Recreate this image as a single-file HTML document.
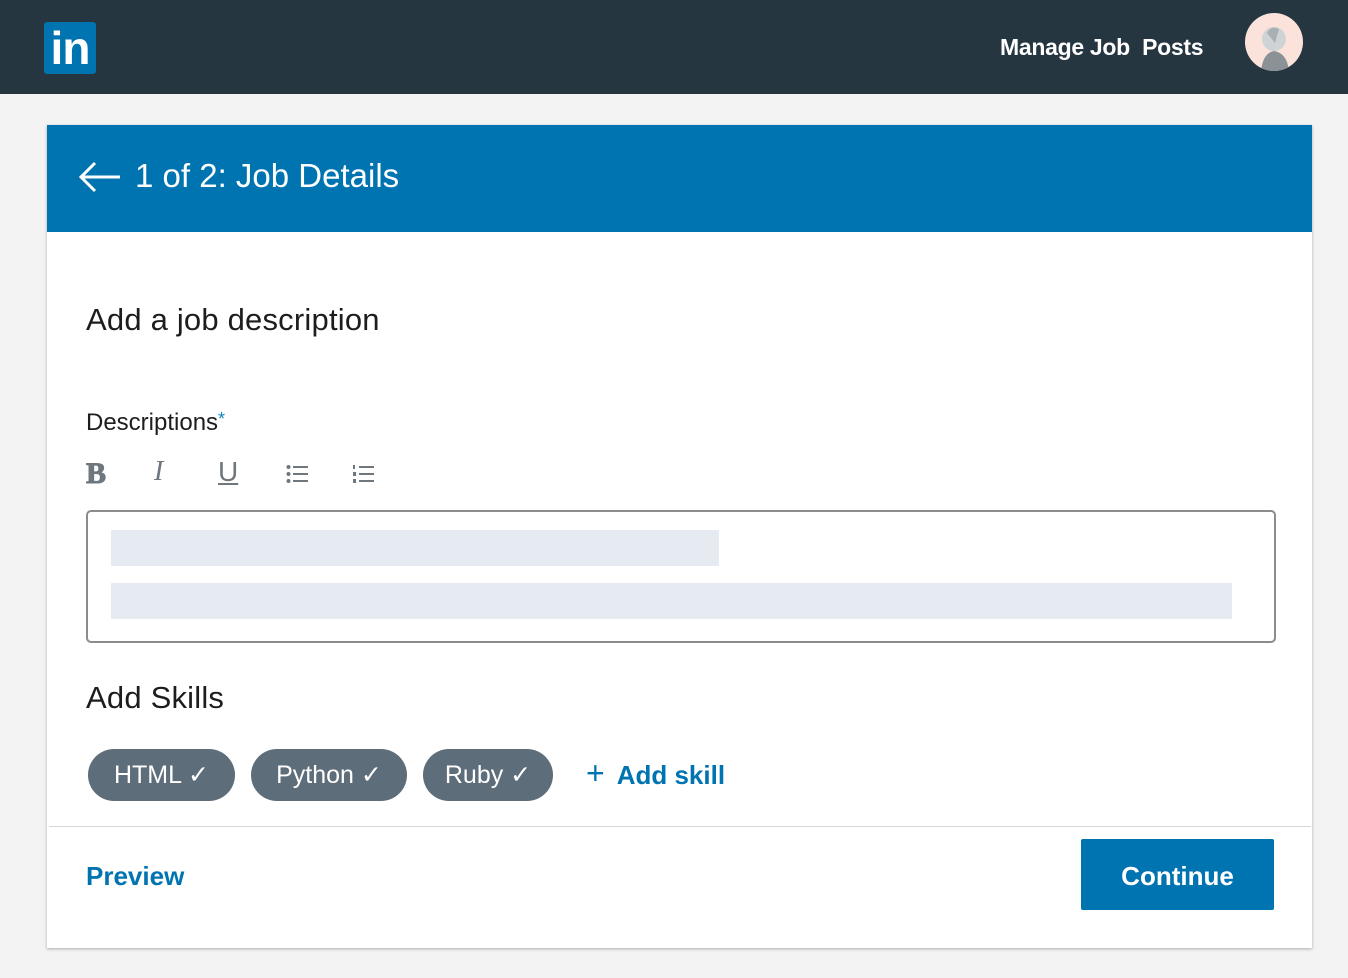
<!DOCTYPE html>
<html><head><meta charset="utf-8"><style>
*{margin:0;padding:0;box-sizing:border-box}
body{width:1348px;height:978px;background:#f3f3f3;font-family:"Liberation Sans",sans-serif;position:relative;overflow:hidden}
.abs{position:absolute}
.top{left:0;top:0;width:1348px;height:94px;background:#263640}
.logo{left:44px;top:22px;width:52px;height:52px;background:#0073b1;border-radius:3px;color:#fff;font-weight:bold;font-size:46px;line-height:52px;text-align:center;letter-spacing:-1px}
.mjp{left:1000px;top:34px;color:#fff;font-size:23px;font-weight:bold;letter-spacing:-0.3px}
.av{left:1245px;top:13px;width:58px;height:58px;border-radius:50%;background:#fbe3dc;overflow:hidden}
.card{left:47px;top:125px;width:1265px;height:823px;background:#fff;box-shadow:0 1px 3px rgba(0,0,0,.3)}
.hd{left:47px;top:125px;width:1265px;height:107px;background:#0073b1}
.t1{left:135px;top:157px;color:#fff;font-size:33px}
.h2{left:86px;top:302px;font-size:31px;color:#1d1d1d;letter-spacing:0.2px}
.lab{left:86px;top:409px;font-size:24px;color:#1d1d1d}
.lab span{color:#0a84c4;font-size:18px;vertical-align:top}
.tb{top:456px;color:#6e777e;font-size:28px;font-weight:bold}
.ta{left:86px;top:510px;width:1190px;height:133px;border:2px solid #8c8c8c;border-radius:5px}
.bar{background:#e6ebf2;height:36px}
.pill{top:749px;height:52px;border-radius:26px;background:#5e6d7a;color:#fff;font-size:25px;line-height:52px;text-align:center}
.blue{color:#0073b1}
</style></head><body>
<div class="abs top"></div>
<div class="abs logo">in</div>
<div class="abs mjp">Manage Job&nbsp; Posts</div>
<div class="abs av"><svg width="58" height="58"><circle cx="29" cy="26" r="12" fill="#cfd3d5"/><path d="M16 58 Q18 40 29 38 Q42 40 44 58Z" fill="#8a9197"/><path d="M22 20 Q26 12 34 16 L30 30 Z" fill="#a9b0b4"/></svg></div>
<div class="abs card"></div>
<div class="abs hd"></div>
<svg class="abs" style="left:78px;top:160px" width="44" height="34"><path d="M42 17H3M17 3L3 17L17 31" stroke="#fff" stroke-width="3" fill="none"/></svg>
<div class="abs t1">1 of 2: Job Details</div>
<div class="abs h2">Add a job description</div>
<div class="abs lab">Descriptions<span>*</span></div>
<div class="abs tb" style="left:86px;top:457px;font-family:'Liberation Serif',serif;font-size:30px;-webkit-text-stroke:1px #6e777e">B</div>
<div class="abs tb" style="left:154px;font-family:'Liberation Serif',serif;font-style:italic;font-weight:normal">I</div>
<div class="abs tb" style="left:218px;font-weight:normal;text-decoration:underline">U</div>
<svg class="abs" style="left:286px;top:464px" width="24" height="20" fill="#6e777e"><circle cx="2.5" cy="3" r="2"/><circle cx="2.5" cy="10" r="2"/><circle cx="2.5" cy="17" r="2"/><rect x="7" y="2" width="15" height="2"/><rect x="7" y="9" width="15" height="2"/><rect x="7" y="16" width="15" height="2"/></svg>
<svg class="abs" style="left:352px;top:464px" width="24" height="20" fill="#6e777e"><rect x="1" y="1" width="2" height="4"/><rect x="1" y="8" width="3" height="4"/><rect x="1" y="15" width="3" height="4"/><rect x="7" y="2" width="15" height="2"/><rect x="7" y="9" width="15" height="2"/><rect x="7" y="16" width="15" height="2"/></svg>
<div class="abs ta"></div>
<div class="abs bar" style="left:111px;top:530px;width:608px"></div>
<div class="abs bar" style="left:111px;top:583px;width:1121px"></div>
<div class="abs h2" style="top:680px">Add Skills</div>
<div class="abs pill" style="left:88px;width:147px">HTML ✓</div>
<div class="abs pill" style="left:251px;width:156px">Python ✓</div>
<div class="abs pill" style="left:423px;width:130px">Ruby ✓</div>
<div class="abs blue" style="left:586px;top:760px;font-size:26px;font-weight:bold"><span style="font-weight:normal;font-size:32px;line-height:26px;margin-right:12px">+</span>Add skill</div>
<div class="abs" style="left:49px;top:826px;width:1262px;height:1px;background:#d5d8da"></div>
<div class="abs blue" style="left:86px;top:861px;font-size:26px;font-weight:bold">Preview</div>
<div class="abs" style="left:1081px;top:839px;width:193px;height:71px;background:#0073b1;border-radius:2px;color:#fff;font-size:26px;font-weight:bold;line-height:74px;text-align:center">Continue</div>
</body></html>
